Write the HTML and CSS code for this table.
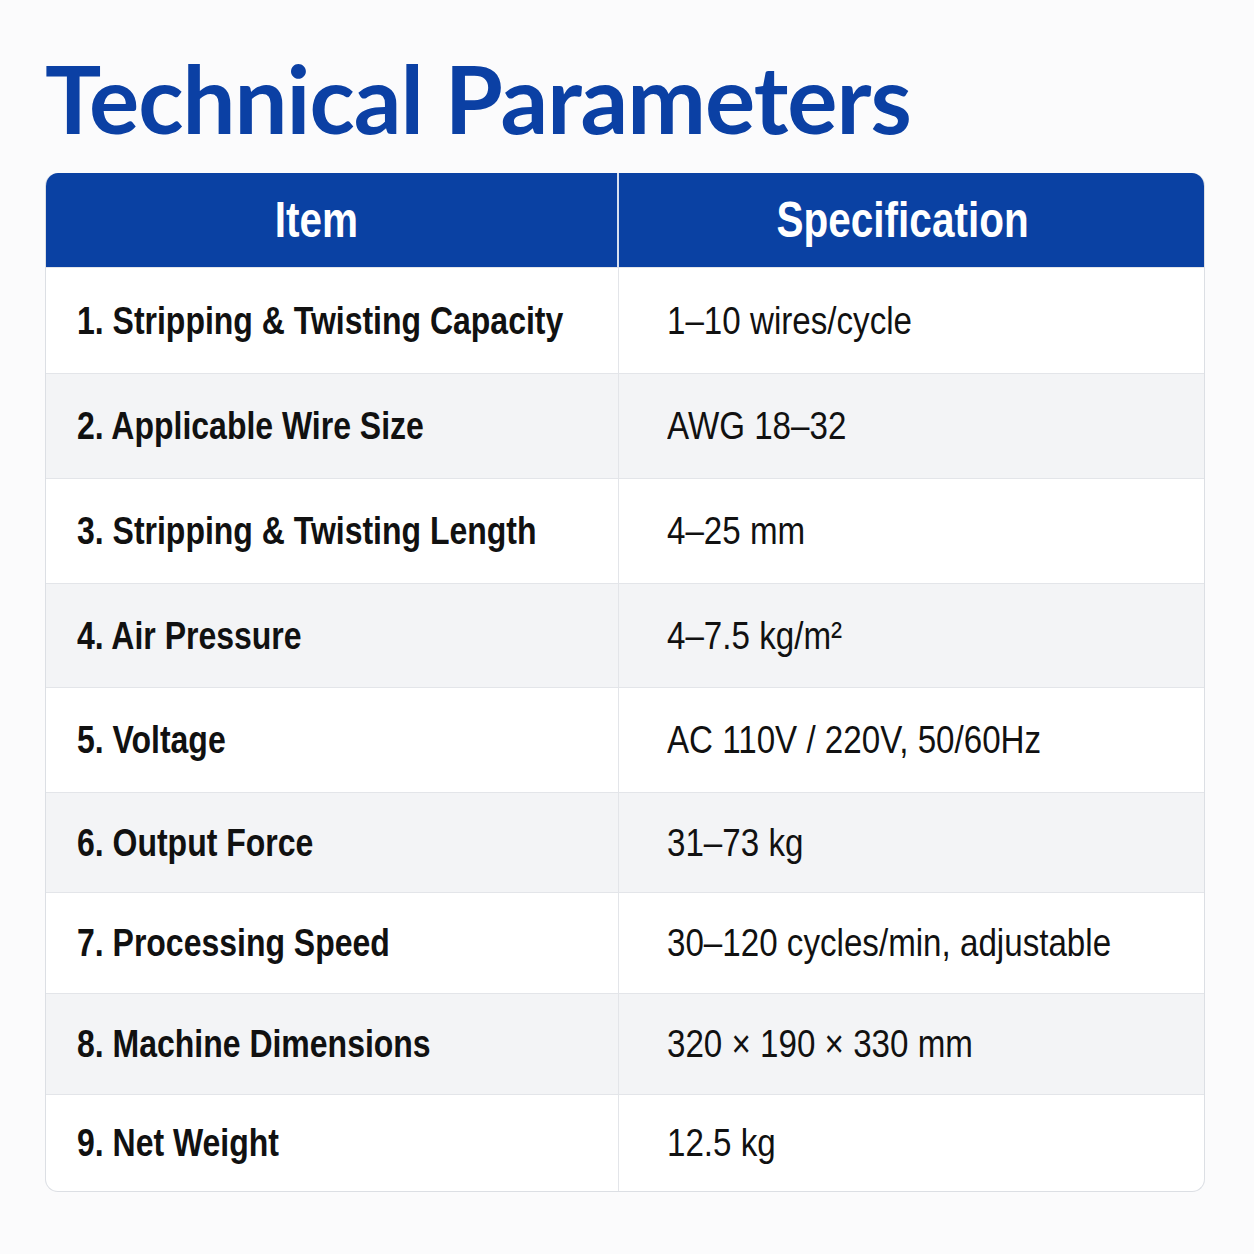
FILE: index.html
```html
<!DOCTYPE html>
<html>
<head>
<meta charset="utf-8">
<link rel="stylesheet" href="styles.css">
</head>
<body>
<div class="page">
  <h1 class="title">Technical Parameters</h1>
  <div class="table">
    <div class="row head">
      <div class="cell c1"><span class="t">Item</span></div>
      <div class="cell c2"><span class="t">Specification</span></div>
    </div>
    <div class="row r1"><div class="cell c1"><span class="t">1. Stripping &amp; Twisting Capacity</span></div><div class="cell c2"><span class="t">1–10 wires/cycle</span></div></div>
    <div class="row r2 alt"><div class="cell c1"><span class="t">2. Applicable Wire Size</span></div><div class="cell c2"><span class="t">AWG 18–32</span></div></div>
    <div class="row r3"><div class="cell c1"><span class="t">3. Stripping &amp; Twisting Length</span></div><div class="cell c2"><span class="t">4–25 mm</span></div></div>
    <div class="row r4 alt"><div class="cell c1"><span class="t">4. Air Pressure</span></div><div class="cell c2"><span class="t">4–7.5 kg/m²</span></div></div>
    <div class="row r5"><div class="cell c1"><span class="t">5. Voltage</span></div><div class="cell c2"><span class="t">AC 110V / 220V, 50/60Hz</span></div></div>
    <div class="row r6 alt"><div class="cell c1"><span class="t">6. Output Force</span></div><div class="cell c2"><span class="t">31–73 kg</span></div></div>
    <div class="row r7"><div class="cell c1"><span class="t">7. Processing Speed</span></div><div class="cell c2"><span class="t">30–120 cycles/min, adjustable</span></div></div>
    <div class="row r8 alt"><div class="cell c1"><span class="t">8. Machine Dimensions</span></div><div class="cell c2"><span class="t">320 × 190 × 330 mm</span></div></div>
    <div class="row r9"><div class="cell c1"><span class="t">9. Net Weight</span></div><div class="cell c2"><span class="t">12.5 kg</span></div></div>
  </div>
</div>
</body>
</html>
```
FILE: styles.css
```css
html, body {
  margin: 0;
  padding: 0;
  background: #fbfbfc;
}
.page {
  width: 1254px;
  height: 1254px;
  padding: 51px 49px 0 45px;
  box-sizing: border-box;
}
.title {
  margin: 0 0 28px 0;
  font-family: Lato, "Liberation Sans", sans-serif;
  font-weight: 700;
  font-size: 94px;
  line-height: 94px;
  height: 94px;
  letter-spacing: -1px;
  color: #0b40a4;
  white-space: nowrap;
}
.table {
  border: 1px solid #dcdfe4;
  border-top: none;
  border-radius: 13px;
  overflow: hidden;
  background: #fff;
}
.row {
  display: grid;
  grid-template-columns: 573px 1fr;
  border-top: 1px solid #e3e5e9;
  box-sizing: border-box;
  font-family: "Liberation Sans", sans-serif;
  color: #111;
}
.row.alt { background: #f3f4f6; }
.cell {
  display: flex;
  align-items: center;
  white-space: nowrap;
}
.t {
  display: inline-block;
  transform-origin: left center;
}
.c1 {
  border-right: 1px solid #e3e5e9;
  padding-left: 31px;
  font-weight: 700;
  font-size: 39px;
}
.c1 .t { transform: scaleX(0.82); }
.c2 {
  padding-left: 48px;
  font-size: 39px;
}
.c2 .t { transform: scaleX(0.85); }
.head {
  background: #0a41a3;
  border-top: none;
  height: 94px;
  color: #fff;
}
.head .cell {
  justify-content: center;
  font-weight: 700;
  font-size: 50px;
}
.head .c1 { padding: 0 30px 0 0; }
.head .c2 { padding: 0 18px 0 0; }
.head .cell .t {
  transform-origin: center center;
  transform: scaleX(0.81);
}
.head .c1 { border-right: 2px solid #d8e0f0; }
.r1 { height: 106px; }
.r2 { height: 105px; }
.r3 { height: 105px; }
.r4 { height: 104px; }
.r5 { height: 105px; }
.r6 { height: 100px; }
.r7 { height: 101px; }
.r8 { height: 101px; }
.r9 { height: 97px; }
```
